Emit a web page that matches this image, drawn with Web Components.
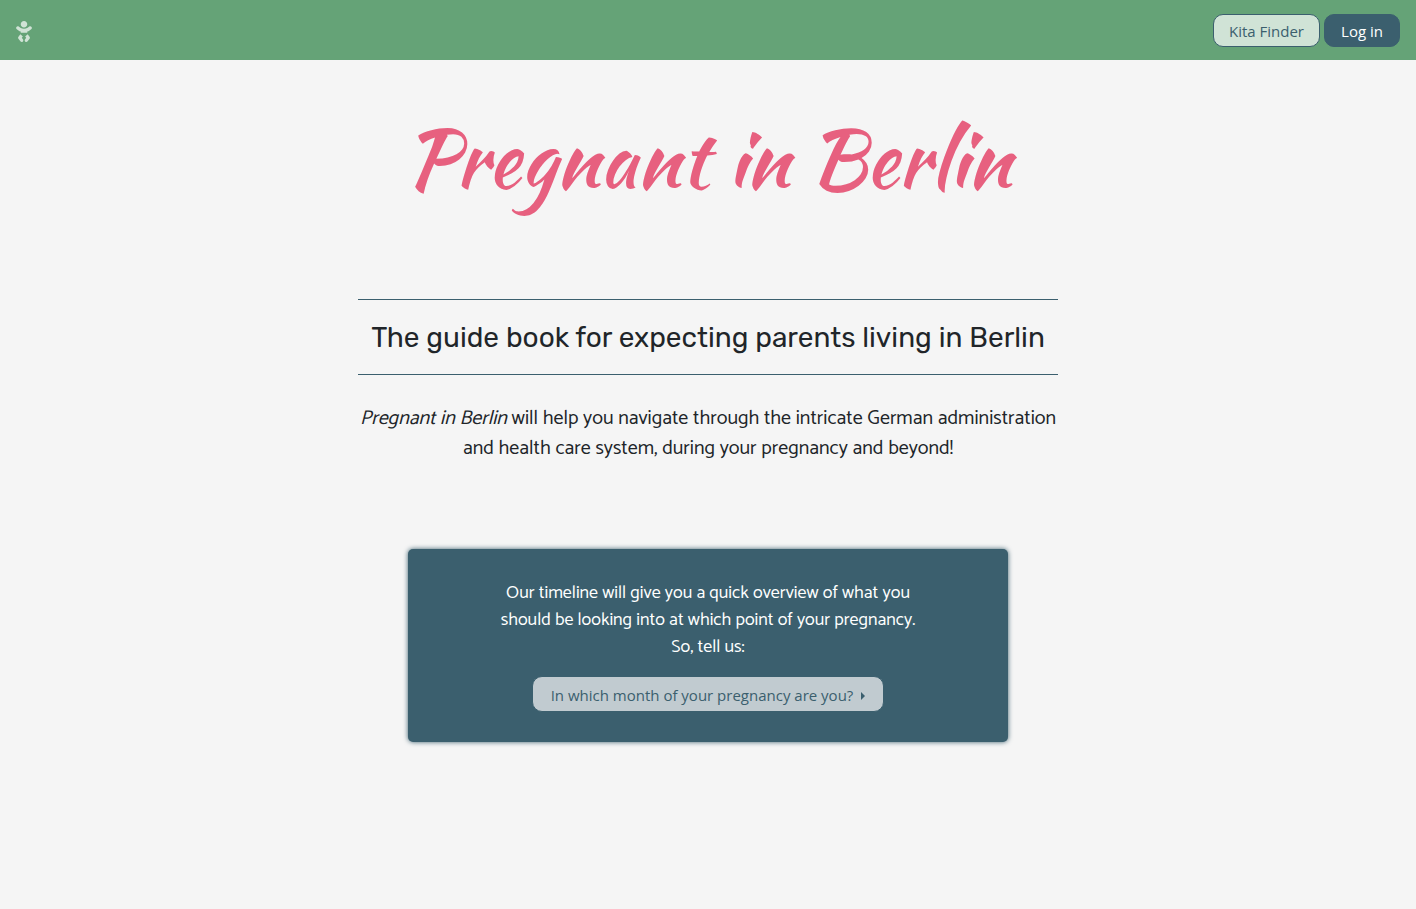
<!DOCTYPE html>
<html lang="en">
<head>
<meta charset="utf-8">
<meta name="viewport" content="width=device-width, initial-scale=1">
<title>Pregnant in Berlin</title>
<style>
  :root {
    --green: #65a377;
    --teal: #3b5f6e;
    --pink: #e7607f;
    --ink: #212529;
    --paper: #f5f5f5;
    --ui-font: "Segoe UI", Selawik, "Open Sans", "Noto Sans", sans-serif;
    --body-font: Catamaran, Lato, sans-serif;
    --heading-font: Rubik, Roboto, sans-serif;
    --script-font: "Kaushan Script", Lato, cursive;
  }
  body { margin: 0; background: var(--paper); color: var(--ink); font-family: var(--body-font); }
</style>
</head>
<body>
<pib-navbar>
  <pib-pill href="#kita" tone="light">Kita Finder</pib-pill>
  <pib-pill href="#login" tone="dark">Log in</pib-pill>
</pib-navbar>
<pib-hero>
  <span slot="title">Pregnant in Berlin</span>
  <span slot="tagline">The guide book for expecting parents living in Berlin</span>
  <em>Pregnant in Berlin</em> will help you navigate through the intricate German administration<br>and health care system, during your pregnancy and beyond!
</pib-hero>
<pib-timeline-card>
  Our timeline will give you a quick overview of what you<br>should be looking into at which point of your pregnancy.<br>So, tell us:
  <pib-month-button slot="action">In which month of your pregnancy are you?</pib-month-button>
</pib-timeline-card>

<script>
class PibElement extends HTMLElement {
  constructor() {
    super();
    this.attachShadow({ mode: "open" }).innerHTML = this.constructor.markup;
  }
}

class PibNavbar extends PibElement {
  static markup = `
    <style>
      :host { display: block; background: var(--green); }
      nav { display: flex; box-sizing: border-box; align-items: center; justify-content: space-between; min-height: 60px; padding: 1px 16px 0; }
      .home { display: flex; padding-top: 2px; color: #d0e3d6; }
      svg { display: block; width: 16px; height: 21px; fill: currentColor; }
      .links { display: flex; gap: 4px; }
    </style>
    <nav aria-label="Main">
      <a class="home" href="#home" aria-label="Home">
        <svg viewBox="0 0 384 512" aria-hidden="true"><path d="M192 160c44.2 0 80-35.8 80-80S236.2 0 192 0s-80 35.8-80 80 35.8 80 80 80zm-53.4 248.8l25.6-32-61.5-51.2L56.8 383c-11.4 14.2-11.7 34.4-.8 49l48 64c7.9 10.5 19.9 16 32 16 8.3 0 16.8-2.6 24-8 17.7-13.2 21.2-38.3 8-56l-29.4-39.2zm142.7-83.2l-61.5 51.2 25.6 32L216 448c-13.2 17.7-9.7 42.8 8 56 7.2 5.4 15.6 8 24 8 12.2 0 24.2-5.5 32-16l48-64c10.9-14.6 10.6-34.8-.8-49l-45.9-57.4zM376.7 145c-12.7-18.1-37.6-22.4-55.7-9.8l-40.6 28.5c-52.7 37-124.2 37-176.8 0L63 135.3C44.9 122.6 20 127 7.3 145-5.4 163.1-1 188 17 200.7l40.6 28.5c17 11.9 35.4 20.9 54.4 27.9V288h160v-30.8c19-7 37.4-16 54.4-27.9l40.6-28.5c18.1-12.8 22.4-37.7 9.7-55.8z"/></svg>
      </a>
      <div class="links"><slot></slot></div>
    </nav>`;
}

class PibPill extends PibElement {
  static markup = `
    <style>
      :host { display: block; }
      a { display: block; box-sizing: border-box; min-width: 76px; padding: 4px 15px 3px; border: 1px solid var(--teal); border-radius: 10px;
          font: 15px/24px var(--ui-font); text-decoration: none; white-space: nowrap; text-align: center; }
      :host([tone="light"]) a { background: #d0e3d6; color: var(--teal); }
      :host([tone="dark"]) a { background: var(--teal); color: #fff; }
    </style>
    <a><slot></slot></a>`;
  connectedCallback() {
    this.shadowRoot.querySelector("a").href = this.getAttribute("href");
  }
}

class PibHero extends PibElement {
  static markup = `
    <style>
      :host { display: block; padding: 38px 16px 0; text-align: center; }
      h1 { margin: 0; font: 400 80px/120px var(--script-font); color: var(--pink); }
      h2 { box-sizing: border-box; max-width: 700px; margin: 81px auto 0; padding: 21px 0 19px; border: solid var(--teal); border-width: 1px 0;
           font: 400 28px/34px var(--heading-font); }
      p { max-width: 700px; margin: 29px auto 0; font-size: 20px; line-height: 30px; }
    </style>
    <h1><slot name="title"></slot></h1>
    <h2><slot name="tagline"></slot></h2>
    <p><slot></slot></p>`;
}

class PibTimelineCard extends PibElement {
  static markup = `
    <style>
      :host { display: block; padding: 85px 16px 40px; }
      section { box-sizing: border-box; max-width: 600px; margin: 0 auto; padding: 31px 30px 30px; border-radius: 5px;
                background: var(--teal); box-shadow: 0 0 5px var(--teal); color: #fff; text-align: center; }
      p { margin: 0 0 15px; font-size: 18px; line-height: 27px; }
    </style>
    <section><p><slot></slot></p><slot name="action"></slot></section>`;
}

class PibMonthButton extends PibElement {
  static markup = `
    <style>
      :host { display: flex; justify-content: center; }
      button { display: flex; align-items: center; gap: 8px; padding: 6px 18px 4px; border: 1px solid var(--teal); border-radius: 10px;
               background: #c1cbd0; color: var(--teal); font: 15px/24px var(--ui-font); }
      .caret { width: 0; height: 0; margin-top: 2px; border: solid transparent; border-width: 4px 0 4px 4px; border-left-color: currentColor; }
    </style>
    <button type="button" aria-haspopup="true"><slot></slot><span class="caret"></span></button>`;
}

customElements.define("pib-navbar", PibNavbar);
customElements.define("pib-pill", PibPill);
customElements.define("pib-hero", PibHero);
customElements.define("pib-timeline-card", PibTimelineCard);
customElements.define("pib-month-button", PibMonthButton);
</script>
</body>
</html>
